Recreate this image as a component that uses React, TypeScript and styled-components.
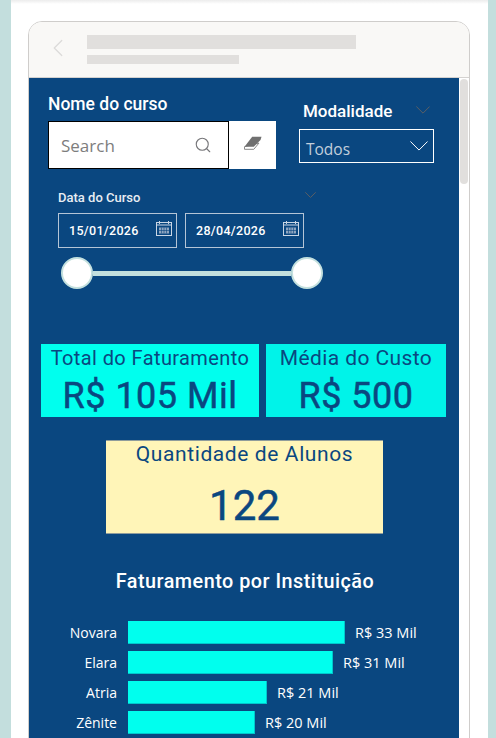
import React from 'react';
import styled, { createGlobalStyle } from 'styled-components';
import { ChevronLeft, Search } from 'lucide-react';

const din = `Roboto, "Liberation Sans", sans-serif`;
const segoe = `"Open Sans", "Noto Sans", sans-serif`;

const bars = [
  { name: 'Novara', width: 217, value: 'R$ 33 Mil' },
  { name: 'Elara', width: 205, value: 'R$ 31 Mil' },
  { name: 'Atria', width: 139, value: 'R$ 21 Mil' },
  { name: 'Zênite', width: 127, value: 'R$ 20 Mil' },
];

function Chevron({ width, color }: { width: number; color: string }) {
  const height = Math.round(width * 0.55);
  return (
    <svg width={width} height={height} viewBox="0 0 20 11" fill="none" stroke={color} strokeWidth={20 / width}>
      <path d="M0.5 0.5L10 10L19.5 0.5" />
    </svg>
  );
}

function CalendarIcon() {
  return (
    <CalendarSvg width="16" height="15" viewBox="0 0 16 15" fill="none" stroke="#c9d6e4" strokeWidth="1">
      <rect x="0.5" y="1.5" width="15" height="13" />
      <path d="M3.5 0v3M12.5 0v3M0.5 4h15" />
      <path d="M3 6.5h10v6H3z" fill="#8fa6c0" stroke="none" />
      <path d="M5.5 6.5v6M8 6.5v6M10.5 6.5v6M3 9.5h10" stroke="#0a4780" strokeWidth="0.6" />
    </CalendarSvg>
  );
}

function EraserIcon() {
  return (
    <svg width="20" height="15" viewBox="0 0 20 15">
      <path d="M1.5 11.7v2.6h9.3L16 8z" fill="#fff" stroke="#8a8a8a" strokeWidth="1" />
      <path d="M9.2 1.7h9.3l-1 3.3-6.7 6.7H1.5z" fill="#707070" />
    </svg>
  );
}

function App() {
  return (
    <>
      <GlobalStyle />
      <Page>
        <Sheet>
          <Frame>
            <Header>
              <ChevronLeft size={30} strokeWidth={1} color="#dcdbd9" />
              <HeaderLines>
                <TitleLine />
                <SubtitleLine />
              </HeaderLines>
            </Header>
            <Body>
              <Report>
                <FilterRow>
                  <CourseFilter>
                    <FilterTitle>Nome do curso</FilterTitle>
                    <SearchRow>
                      <SearchBox>
                        <span>Search</span>
                        <Search size={18} strokeWidth={1.5} color="#77777a" />
                      </SearchBox>
                      <EraserButton>
                        <EraserIcon />
                      </EraserButton>
                    </SearchRow>
                  </CourseFilter>
                  <ModeFilter>
                    <ModeHeading>
                      <ModeTitle>Modalidade</ModeTitle>
                      <Chevron width={14} color="#5c5f63" />
                    </ModeHeading>
                    <Dropdown>
                      <span>Todos</span>
                      <Chevron width={18} color="#ffffff" />
                    </Dropdown>
                  </ModeFilter>
                </FilterRow>

                <DateFilter>
                  <DateHeading>
                    <DateTitle>Data do Curso</DateTitle>
                    <Chevron width={11} color="#5c5f63" />
                  </DateHeading>
                  <DateRow>
                    <DateBox>
                      <span>15/01/2026</span>
                      <CalendarIcon />
                    </DateBox>
                    <DateBox>
                      <span>28/04/2026</span>
                      <CalendarIcon />
                    </DateBox>
                  </DateRow>
                  <Slider>
                    <Thumb />
                    <Track />
                    <Thumb />
                  </Slider>
                </DateFilter>

                <KpiRow>
                  <Kpi $width={218}>
                    <KpiLabel $size={20}>Total do Faturamento</KpiLabel>
                    <KpiValue>R$ 105 Mil</KpiValue>
                  </Kpi>
                  <Kpi $width={180} $tint="#00f3e9">
                    <KpiLabel $size={21}>Média do Custo</KpiLabel>
                    <KpiValue>R$ 500</KpiValue>
                  </Kpi>
                </KpiRow>

                <StudentsCard>
                  <StudentsLabel>Quantidade de Alunos</StudentsLabel>
                  <StudentsValue>122</StudentsValue>
                </StudentsCard>

                <ChartTitle>Faturamento por Instituição</ChartTitle>
                <Chart>
                  {bars.map((bar) => (
                    <BarRow key={bar.name}>
                      <BarName>{bar.name}</BarName>
                      <Bar style={{ width: bar.width }} />
                      <BarValue>{bar.value}</BarValue>
                    </BarRow>
                  ))}
                </Chart>
              </Report>
              <Scrollbar>
                <ScrollThumb />
              </Scrollbar>
            </Body>
          </Frame>
        </Sheet>
      </Page>
    </>
  );
}

const GlobalStyle = createGlobalStyle`
  html, body {
    margin: 0;
    height: 100%;
    overflow: hidden;
  }
  #root {
    height: 100%;
  }
`;

const Page = styled.div`
  height: 738px;
  background: #c3dedd;
  padding: 0 8px 0 11px;
  box-sizing: border-box;
  overflow: hidden;
`;

const Sheet = styled.div`
  height: 100%;
  background: linear-gradient(#ececec, #ffffff 4px);
  padding: 21px 0 0 17px;
  box-sizing: border-box;
`;

const Frame = styled.div`
  height: 760px;
  width: 442px;
  border: 1px solid #cfcdcb;
  border-radius: 14px 14px 0 0;
  background: #fff;
  box-sizing: border-box;
  overflow: hidden;
`;

const Header = styled.div`
  height: 56px;
  background: #f9f8f6;
  border-bottom: 1px solid #d4d2d0;
  box-sizing: border-box;
  display: flex;
  align-items: center;
  padding: 0 0 4px 14px;
  gap: 14px;
`;

const HeaderLines = styled.div`
  display: flex;
  flex-direction: column;
  gap: 6px;
  padding-top: 3px;
`;

const TitleLine = styled.div`
  width: 269px;
  height: 14px;
  background: #e1dfdd;
`;

const SubtitleLine = styled.div`
  width: 152px;
  height: 9px;
  background: #e1dfdd;
`;

const Body = styled.div`
  display: flex;
`;

const Report = styled.div`
  width: 430px;
  height: 700px;
  background: #0a4780;
  flex: none;
`;

const Scrollbar = styled.div`
  flex: 1;
  padding: 1px 1px 0;
`;

const ScrollThumb = styled.div`
  height: 105px;
  background: #e1dfdd;
  border-radius: 4px;
`;

const FilterRow = styled.div`
  display: flex;
  padding: 16px 0 0 19px;
`;

const CourseFilter = styled.div`
  width: 228px;
`;

const FilterTitle = styled.div`
  font-family: ${din};
  font-weight: 500;
  font-size: 17.5px;
  line-height: 20px;
  color: #fff;
`;

const SearchRow = styled.div`
  display: flex;
  margin-top: 7px;
`;

const SearchBox = styled.div`
  width: 181px;
  height: 48px;
  background: #fff;
  border: 1px solid #000;
  box-sizing: border-box;
  display: flex;
  align-items: center;
  justify-content: space-between;
  padding: 0 16px 0 12px;
  font-family: ${segoe};
  font-size: 17px;
  color: #7d7d7d;
`;

const EraserButton = styled.div`
  width: 47px;
  height: 48px;
  background: #fff;
  display: flex;
  align-items: flex-start;
  justify-content: center;
  padding-top: 14px;
  box-sizing: border-box;
`;

const ModeFilter = styled.div`
  margin-left: 23px;
  padding-top: 7px;
  width: 135px;
`;

const ModeHeading = styled.div`
  display: flex;
  align-items: flex-start;
  justify-content: space-between;
  padding: 0 4px;
  & > svg {
    margin-top: 5px;
  }
`;

const ModeTitle = styled.div`
  font-family: ${din};
  font-weight: 500;
  font-size: 17px;
  line-height: 20px;
  color: #fff;
`;

const Dropdown = styled.div`
  height: 34px;
  margin-top: 8px;
  border: 1px solid #fff;
  box-sizing: border-box;
  display: flex;
  align-items: center;
  justify-content: space-between;
  padding: 0 5px 0 6px;
  font-family: ${segoe};
  font-size: 15.5px;
  line-height: 20px;
  color: #c3cfdc;
  & > span {
    padding-top: 5px;
  }
`;

const DateFilter = styled.div`
  width: 258px;
  margin: 18px 0 0 29px;
`;

const DateHeading = styled.div`
  display: flex;
  align-items: flex-start;
  justify-content: space-between;
  height: 18px;
  & > svg {
    margin-top: 5px;
  }
`;

const DateTitle = styled.div`
  font-family: ${din};
  font-weight: 500;
  font-size: 13px;
  line-height: 18px;
  padding-top: 2px;
  color: #e8edf3;
`;

const DateRow = styled.div`
  display: flex;
  gap: 8px;
  margin-top: 8px;
`;

const DateBox = styled.div`
  width: 119px;
  height: 35px;
  border: 1px solid #b5c5d6;
  box-sizing: border-box;
  display: flex;
  align-items: center;
  justify-content: space-between;
  padding: 0 4px 0 10px;
  font-family: ${din};
  font-weight: 500;
  font-size: 12.5px;
  letter-spacing: 0.3px;
  color: #fff;
`;

const CalendarSvg = styled.svg`
  margin-bottom: 4px;
`;

const Slider = styled.div`
  width: 262px;
  display: flex;
  align-items: center;
  margin: 9px 0 0 3px;
`;

const Thumb = styled.div`
  width: 32px;
  height: 32px;
  flex: none;
  border-radius: 50%;
  background: #fff;
  box-sizing: border-box;
  border: 2px solid #c3e0de;
`;

const Track = styled.div`
  flex: 1;
  height: 5px;
  background: #c3e0de;
`;

const KpiRow = styled.div`
  display: flex;
  gap: 7px;
  margin: 55px 0 0 12px;
`;

const Kpi = styled.div<{ $width: number; $tint?: string }>`
  width: ${(p) => p.$width}px;
  height: 73px;
  background: ${(p) => p.$tint || '#00ffee'};
  color: #0a4780;
  text-align: center;
  font-family: ${din};
`;

const KpiLabel = styled.div<{ $size: number }>`
  font-size: ${(p) => p.$size}px;
  line-height: 28px;
  letter-spacing: 0.4px;
`;

const KpiValue = styled.div`
  font-size: 36px;
  -webkit-text-stroke: 0.5px #0a4780;
  line-height: 44px;
  letter-spacing: 0.5px;
  margin-top: 2px;
`;

const StudentsCard = styled.div`
  width: 277px;
  height: 94px;
  margin: 23px 0 0 77px;
  background: #fff5b8;
  box-shadow: inset 0 1px 0 #8f9c9c, inset 0 -1px 0 #8f9c9c;
  color: #0a4780;
  text-align: center;
  font-family: ${din};
`;

const StudentsLabel = styled.div`
  font-size: 21px;
  line-height: 28px;
  letter-spacing: 0.6px;
`;

const StudentsValue = styled.div`
  font-size: 42px;
  -webkit-text-stroke: 0.5px #0a4780;
  line-height: 52px;
  margin-top: 12px;
`;

const ChartTitle = styled.div`
  margin-top: 36px;
  width: 432px;
  text-align: center;
  font-family: ${din};
  font-weight: 500;
  font-size: 19.8px;
  line-height: 24px;
  letter-spacing: 0.5px;
  color: #fff;
`;

const Chart = styled.div`
  display: flex;
  flex-direction: column;
  gap: 7px;
  margin-top: 27px;
`;

const BarRow = styled.div`
  display: flex;
  align-items: center;
  height: 23px;
  font-family: ${segoe};
  font-size: 14.5px;
  color: #fff;
`;

const BarName = styled.div`
  width: 88px;
  text-align: right;
  margin-right: 11px;
  font-size: 14px;
`;

const Bar = styled.div`
  height: 23px;
  background: #00ffee;
  border-right: 1px solid #00c8cc;
  border-bottom: 1px solid #00c8cc;
  box-sizing: border-box;
`;

const BarValue = styled.div`
  margin-left: 10px;
`;

export default App;
